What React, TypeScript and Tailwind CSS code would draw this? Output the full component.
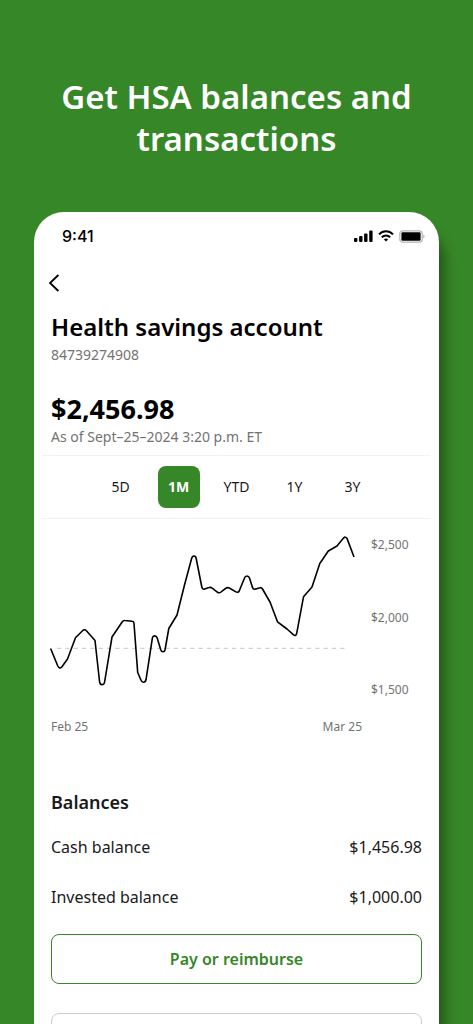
import clsx from "clsx";

const ranges = ["5D", "1M", "YTD", "1Y", "3Y"];

const balances = [
  { label: "Cash balance", value: "$1,456.98" },
  { label: "Invested balance", value: "$1,000.00" },
];

function StatusBar() {
  return (
    <div className="flex h-5 items-center justify-between pr-[14px] pl-7">
      <span className="font-['Inter',sans-serif] text-base font-medium">9:41</span>

      <div className="flex items-center gap-[5px]">
        <svg width="19" height="12" viewBox="0 0 19 12">
          <rect x="0" y="8" width="3.4" height="4" rx="1" />
          <rect x="5.1" y="6" width="3.4" height="6" rx="1" />
          <rect x="10.1" y="3.4" width="3.4" height="8.6" rx="1" />
          <rect x="15.2" y="0.6" width="3.4" height="11.4" rx="1" />
        </svg>

        <svg width="16" height="12" viewBox="0 0 16 12" fill="none" stroke="#000" strokeWidth="2">
          <path d="M1 4.4C5 0.3 11 0.3 15 4.4" />
          <path d="M3.8 7.3C6.2 4.9 9.8 4.9 12.2 7.3" />
          <path d="M5.9 9.4C7.1 8.3 8.9 8.3 10.1 9.4L8 11.6Z" fill="#000" stroke="none" />
        </svg>

        <svg width="26" height="13" viewBox="0 0 26 13">
          <rect x="0.8" y="0.8" width="22.4" height="11.4" rx="3" fill="#fff" stroke="#b5b5b5" strokeWidth="1.2" />
          <rect x="2.4" y="2.3" width="19.2" height="8.4" rx="1.2" />
          <path d="M24.3 4.5C26 5.2 26 7.8 24.3 8.5Z" fill="#b5b5b5" />
        </svg>
      </div>
    </div>
  );
}

function Chart() {
  return (
    <svg className="min-w-0 flex-1 overflow-visible" viewBox="51 525 304 180" fill="none">
      <path d="M57 648.3H348" stroke="#d0d0d0" strokeWidth="1.3" strokeDasharray="4.2 4.13" />
      <path
        d="M50.6 648.5L57.8 666Q59.5 669.3 61.8 667L67.5 659L75.5 637.8L82.5 630.8Q84.4 628.7 86.4 630.8L95 640.5L99.6 682Q100.3 684.8 102 684.6Q104.2 684.8 104.6 682L112 637L122.3 621.8Q123.2 620.2 125 620.5L132 621.3Q133.8 621.3 134 623.5L137.7 672.5L140.8 679.8Q141.8 682.4 143.5 682.2Q145.4 682.3 146 679.8L152.4 637.8Q152.8 635.8 154.8 635.9Q156.5 635.9 157.2 638L160.8 650Q161.4 651.8 163 651.8Q164.6 651.8 165 650L168.8 628.5L177 615L184.5 585L191.6 558.5Q192.3 556 194 556Q195.8 556 196.2 558.5L201.8 587Q202.3 589.5 204 589.2L209 587.6Q210.7 587 212.2 588.2L217 591.8Q219 593.6 221 592L225.5 588.5Q227.5 586.8 229.7 588.2L235.5 591.6Q238 593.2 239.2 591L244.4 578.3Q245.2 576 247 576Q248.8 576 249.6 578.3L252.5 587.5Q253.1 589.4 255 589.2L260 587.7Q261.5 587.2 262.5 589L270 602L277.5 621.8L287 629L293.3 634.7Q295.8 636.8 296.6 633.8L303.5 596.8L312 587L319.8 563.5L328.3 551L337 546L343.3 538.3Q345.5 536 347 538.4L354 557"
        stroke="#000"
        strokeWidth="1.6"
        strokeLinejoin="round"
      />
    </svg>
  );
}

export default function App() {
  return (
    <div className="h-screen overflow-hidden bg-[#368727] px-[34px] pt-[76px] font-['Noto_Sans',sans-serif] text-black">
      <h1 className="text-center text-[33px] leading-[42px] font-semibold text-white">
        Get HSA balances and transactions
      </h1>

      <main className="mt-[52px] rounded-t-[30px] bg-white pt-[14px] pb-16 shadow-[8px_18px_12px_-2px_rgba(0,0,0,0.35)]">
        <StatusBar />

        <div className="px-[17px]">
          <button aria-label="Back" className="mt-[25px] -ml-[5px] block h-6 w-4">
            <svg className="mx-auto" width="12" height="18" viewBox="0 0 12 18" fill="none">
              <path d="M10.4 1L2 9L10.4 17" stroke="#000" strokeWidth="1.8" />
            </svg>
          </button>

          <h2 className="mt-4 text-2xl font-semibold">Health savings account</h2>
          <p className="mt-[2px] text-sm text-[#737373]">84739274908</p>

          <p className="mt-[26px] text-[27px] leading-9 font-bold">$2,456.98</p>
          <p className="text-sm text-[#737373]">As of Sept–25–2024 3:20 p.m. ET</p>
        </div>

        <div className="mx-2 mt-2 flex justify-center gap-4 border-y border-[#f2f2f2] py-[10px]">
          {ranges.map((range) => (
            <button
              key={range}
              className={clsx(
                "size-[42px] rounded-lg text-sm",
                range === "1M" ? "bg-[#368727] font-bold text-white" : "text-[#1a1a1a]"
              )}
            >
              {range}
            </button>
          ))}
        </div>

        <div className="px-[17px]">
          <div className="mt-[6px] flex gap-4">
            <Chart />
            <div className="flex w-[51px] flex-col justify-between pt-[10px] pb-[5px] text-xs leading-5 text-[#737373]">
              <span>$2,500</span>
              <span>$2,000</span>
              <span>$1,500</span>
            </div>
          </div>

          <div className="mt-3 mr-[60px] flex justify-between text-xs leading-5 text-[#737373]">
            <span>Feb 25</span>
            <span>Mar 25</span>
          </div>

          <h3 className="mt-[53px] text-lg leading-6 font-semibold text-[#1a1a1a]">Balances</h3>

          <dl className="mt-[21px] flex flex-col gap-[26px] text-base text-[#1a1a1a]">
            {balances.map((item) => (
              <div key={item.label} className="flex justify-between">
                <dt>{item.label}</dt>
                <dd>{item.value}</dd>
              </div>
            ))}
          </dl>

          <button className="mt-[25px] h-[50px] w-full rounded-lg border border-[#368727] text-base font-semibold text-[#368727]">
            Pay or reimburse
          </button>

          <button aria-label="More options" className="mt-[29px] h-[50px] w-full rounded-lg border border-[#cccccc]" />
        </div>
      </main>
    </div>
  );
}
